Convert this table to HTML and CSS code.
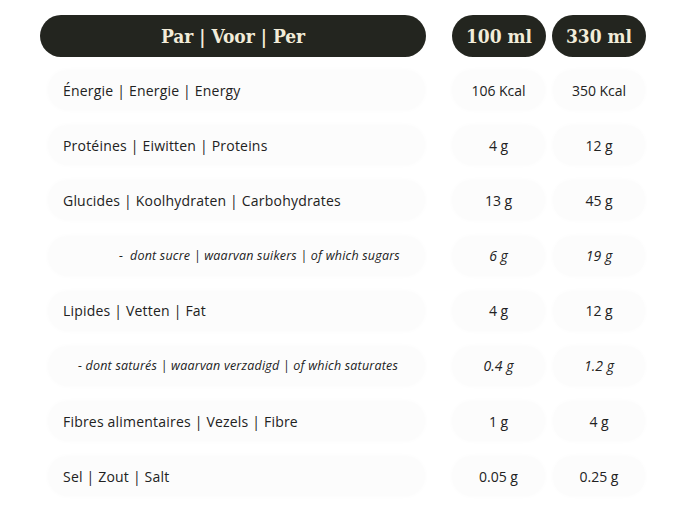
FILE: index.html
```html
<!DOCTYPE html>
<html>
<head>
<meta charset="utf-8">
<link rel="stylesheet" href="styles.css">
</head>
<body>
<div class="table">
  <div class="head">
    <div class="hcell hlabel">Par | Voor | Per</div>
    <div class="hcell hval">100 ml</div>
    <div class="hcell hval">330 ml</div>
  </div>
  <div class="row"><div class="label">Énergie | Energie | Energy</div><div class="val">106 Kcal</div><div class="val">350 Kcal</div></div>
  <div class="row"><div class="label">Protéines | Eiwitten | Proteins</div><div class="val">4 g</div><div class="val">12 g</div></div>
  <div class="row"><div class="label">Glucides | Koolhydraten | Carbohydrates</div><div class="val">13 g</div><div class="val">45 g</div></div>
  <div class="row sub"><div class="label sub1">-&nbsp; dont sucre | waarvan suikers | of which sugars</div><div class="val">6 g</div><div class="val">19 g</div></div>
  <div class="row"><div class="label">Lipides | Vetten | Fat</div><div class="val">4 g</div><div class="val">12 g</div></div>
  <div class="row sub"><div class="label sub2">- dont saturés | waarvan verzadigd | of which saturates</div><div class="val">0.4 g</div><div class="val">1.2 g</div></div>
  <div class="row"><div class="label">Fibres alimentaires | Vezels | Fibre</div><div class="val">1 g</div><div class="val">4 g</div></div>
  <div class="row"><div class="label">Sel | Zout | Salt</div><div class="val">0.05 g</div><div class="val">0.25 g</div></div>
</div>
</body>
</html>
```
FILE: styles.css
```css
html, body { background: #ffffff; }
body {
  margin: 0;
  padding: 15px 0 0 40px;
  font-family: "Open Sans", "Liberation Sans", sans-serif;
  color: #222;
}
.table { display: flex; flex-direction: column; width: 606px; }
.head { display: flex; height: 42px; margin-bottom: 13px; }
.hcell {
  background: #23251f;
  color: #f2ecd9;
  border-radius: 21px;
  display: flex;
  align-items: center;
  justify-content: center;
  font-family: "DejaVu Serif Condensed", "DejaVu Serif", serif;
  font-weight: bold;
  font-size: 19px;
}
.hlabel { width: 386px; }
.hval { width: 94px; margin-left: 26px; }
.hval + .hval { margin-left: 6px; }
.row { display: flex; height: 40px; margin-bottom: 15.2px; }
.label, .val {
  background: #fcfcfc;
  box-shadow: 0 0 4px 1px #fcfcfc;
  border-radius: 20px;
  display: flex;
  align-items: center;
  font-size: 14px;
  font-weight: 400;
}
.label { width: 362px; margin-left: 8px; padding-left: 15px; letter-spacing: 0.2px; }
.val { width: 93px; margin-left: 27px; justify-content: center; }
.val + .val { margin-left: 8px; width: 92px; }
.sub .label { font-style: italic; font-size: 12.5px; letter-spacing: 0.2px; }
.sub .val { font-style: italic; font-size: 14px; }
.sub1 { padding-left: 71px; width: 306px; }
.sub2 { padding-left: 30px; width: 347px; }
```
